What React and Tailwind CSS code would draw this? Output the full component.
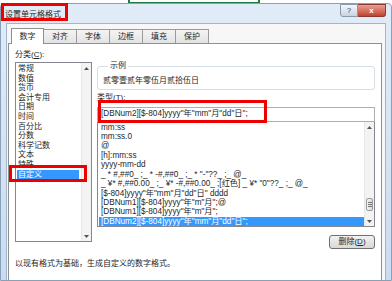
import React from "react";

const categories = ["常规", "数值", "货币", "会计专用", "日期", "时间", "百分比", "分数", "科学记数", "文本", "特殊", "自定义"];

const formats = [
  "mm:ss",
  "mm:ss.0",
  "@",
  "[h]:mm:ss",
  "yyyy-mm-dd",
  '_ * #,##0_ ;_ * -#,##0_ ;_ * "-"??_ ;_ @_',
  '_ ¥* #,##0.00_ ;_ ¥* -#,##0.00_ ;[红色] _ ¥* "0"??_ ;_ @_',
  '[$-804]yyyy"年"mm"月"dd"日" dddd',
  '[DBNum1][$-804]yyyy"年"m"月";@',
  '[DBNum1][$-804]yyyy"年"m"月";',
  '[DBNum2][$-804]yyyy"年"mm"月"dd"日";',
];

const tabs = ["数字", "对齐", "字体", "边框", "填充", "保护"];

const ArrowUp = () => (
  <svg width="5" height="3" viewBox="0 0 5 3"><path d="M0 3 L2.5 0 L5 3 Z" fill="#555" /></svg>
);
const ArrowDown = () => (
  <svg width="5" height="3" viewBox="0 0 5 3"><path d="M0 0 L2.5 3 L5 0 Z" fill="#555" /></svg>
);

const App = () => {
  return (
    <div className="w-[392px] h-[281px] overflow-hidden bg-white flex flex-col font-['Liberation_Sans','Noto_Sans_CJK_SC',sans-serif] text-[8px] text-[#262626] relative">
      {/* excel window behind */}
      <div className="h-[3px] shrink-0 flex">
        <div className="ml-[128px] w-[132px] border-x-2 border-b border-[#1f7a45]" />
      </div>

      {/* dialog */}
      <div className="flex-1 flex flex-col bg-gradient-to-b from-[#e1ecf8] to-[#c9dcf1] border border-[#8a9fb8] rounded-t-[4px]">
        {/* title bar */}
        <div className="h-[19px] shrink-0 flex items-start justify-between">
          <span className="ml-[4px] mt-[6px] leading-[10px] text-[8px]">设置单元格格式</span>
          <div className="flex mr-[5px]">
            <div className="w-[18px] h-[13px] rounded-bl-[3px] border border-[#8899aa] bg-gradient-to-b from-[#f4f7fb] to-[#c8d4e2] flex items-center justify-center text-[8px] text-[#445] leading-none">?</div>
            <div className="w-[28px] h-[13px] rounded-br-[3px] border border-l-0 border-[#8a3a30] bg-gradient-to-b from-[#e8a093] to-[#c3402e] flex items-center justify-center text-white text-[8px] font-bold leading-none">x</div>
          </div>
        </div>

        {/* client area */}
        <div className="flex-1 mx-[5px] bg-[#f7f7f7] border border-[#a3b5c8] border-b-0 flex flex-col pl-[1px] pr-[3px]">
          {/* tabs */}
          <div className="h-[19px] shrink-0 flex items-end pl-[3px]">
            {tabs.map((t, i) => (
              <div
                key={t}
                className={
                  i === 0
                    ? "w-[33px] h-[16px] -mb-[1px] bg-white border border-[#8e8f8f] border-b-0 flex items-center justify-center leading-none relative z-10"
                    : "w-[34px] h-[14px] bg-gradient-to-b from-[#f4f4f4] to-[#e3e3e3] border border-[#9a9a9a] border-b-0 -ml-[1px] flex items-center justify-center leading-none"
                }
              >
                {t}
              </div>
            ))}
          </div>

          {/* tab panel */}
          <div className="flex-1 bg-white border border-[#8e8f8f] border-b-0 flex flex-col pl-[6px] pr-[3px] pt-[6px]">
            <div className="h-[10px] leading-[10px]">
              分类(<span className="underline">C</span>):
            </div>

            <div className="flex items-start">
              {/* category list */}
              <div className="mt-[2px] w-[77px] h-[180px] border border-[#828790] flex">
                <div className="flex-1 pt-[1px] px-[1px]">
                  {categories.map((c) => (
                    <div
                      key={c}
                      className={
                        c === "自定义"
                          ? "h-[9.6px] leading-[9.6px] pl-[1px] mr-[1px] bg-[#3399ff] text-white"
                          : "h-[9.6px] leading-[9.6px] pl-[1px]"
                      }
                    >
                      {c}
                    </div>
                  ))}
                </div>
                <div className="w-[10px] border-l border-[#e6e6e6] bg-[#f3f3f3] flex flex-col">
                  <div className="h-[10px] flex items-center justify-center"><ArrowUp /></div>
                  <div className="flex-1" />
                  <div className="h-[10px] flex items-center justify-center"><ArrowDown /></div>
                </div>
              </div>

              {/* right column */}
              <div className="ml-[5px] mt-[1px] w-[278px] flex flex-col">
                <fieldset className="h-[29px] border border-[#d5dfe5] rounded-[3px] px-[5px]">
                  <legend className="ml-[5px] px-[2px] leading-[10px] text-[8px]">示例</legend>
                  <div className="mt-[5px] leading-[10px]">贰零壹贰年零伍月贰拾伍日</div>
                </fieldset>

                <div className="mt-[3px] h-[10px] leading-[10px]">
                  类型(<span className="underline">T</span>):
                </div>

                <div className="mt-[4px] h-[15px] border border-[#abadb3] flex items-center pl-[3px] text-[8.2px] whitespace-pre">
                  {'[DBNum2][$-804]yyyy"年"mm"月"dd"日";'}
                </div>

                {/* format list */}
                <div className="h-[105px] border border-[#828790] border-t-0 flex overflow-hidden">
                  <div className="flex-1 overflow-hidden pt-[0.5px] pl-[1px] text-[8.2px]">
                    {formats.map((f, i) => (
                      <div
                        key={i}
                        className={
                          i === formats.length - 1
                            ? "h-[9.45px] leading-[9.45px] pl-[2px] bg-[#3399ff] text-white whitespace-pre"
                            : "h-[9.45px] leading-[9.45px] pl-[2px] whitespace-pre"
                        }
                      >
                        {f}
                      </div>
                    ))}
                  </div>
                  <div className="w-[10px] bg-[#f3f3f3] border-l border-[#e6e6e6] flex flex-col">
                    <div className="h-[10px] flex items-center justify-center"><ArrowUp /></div>
                    <div className="flex-1 flex flex-col">
                      <div className="h-[66px]" />
                      <div className="mx-[1px] h-[13px] rounded-[2px] border border-[#9a9a9a] bg-gradient-to-r from-[#f4f4f4] to-[#dcdcdc] flex flex-col items-center justify-center gap-[1px]">
                        <div className="w-[4px] h-px bg-[#777]" />
                        <div className="w-[4px] h-px bg-[#777]" />
                        <div className="w-[4px] h-px bg-[#777]" />
                      </div>
                    </div>
                    <div className="h-[10px] flex items-center justify-center"><ArrowDown /></div>
                  </div>
                </div>

                <div className="mt-[8px] flex justify-end">
                  <div className="w-[46px] h-[14px] rounded-[3px] border border-[#707070] bg-gradient-to-b from-[#f2f2f2] to-[#d8d8d8] flex items-center justify-center leading-none">
                    删除(<span className="underline">D</span>)
                  </div>
                </div>
              </div>
            </div>

            <div className="mt-[10px] leading-[10px]">以现有格式为基础，生成自定义的数字格式。</div>
          </div>
        </div>
      </div>

      {/* red annotation boxes */}
      <div className="absolute left-[1px] top-[3px] w-[67px] h-[18px] border-[3px] border-[#ee0000]" />
      <div className="absolute left-[9px] top-[165px] w-[78px] h-[17px] border-[3px] border-[#ee0000]" />
      <div className="absolute left-[98px] top-[100px] w-[169px] h-[23px] border-[3px] border-[#ee0000]" />
    </div>
  );
};

export default App;
